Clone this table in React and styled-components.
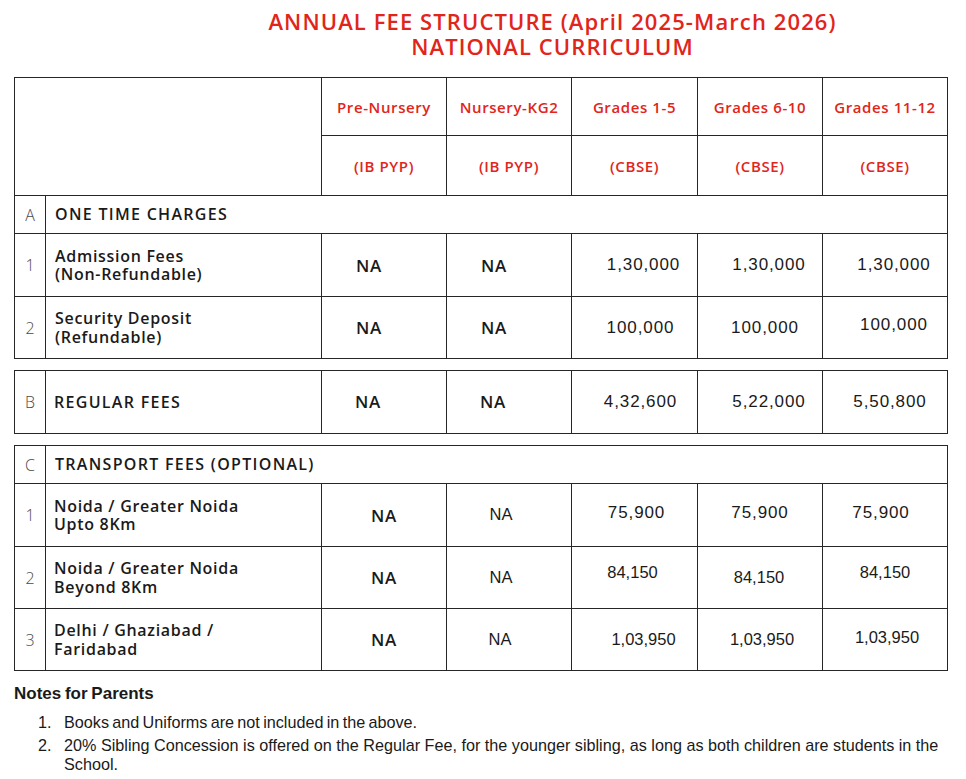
import styled, { createGlobalStyle } from 'styled-components';

const GlobalStyle = createGlobalStyle`
  body {
    margin: 0;
    background: #ffffff;
    font-family: "Open Sans", "Liberation Sans", sans-serif;
    color: #1a1a1a;
  }
`;

const Page = styled.div`
  width: 966px;
  box-sizing: border-box;
  padding: 9px 19px 0 14px;
`;

const Title = styled.h1`
  margin: 0 0 18px;
  padding-left: 144px;
  text-align: center;
  color: #e1251b;
  font-family: "Open Sans", sans-serif;
  font-weight: 600;
  font-size: 22px;
  line-height: 25px;
  letter-spacing: 1.1px;
`;

const Table = styled.table`
  width: 933px;
  table-layout: fixed;
  border-collapse: collapse;
  margin-top: ${({ $gap }) => $gap || 0}px;
`;

const Row = styled.tr`
  height: ${({ $h }) => $h}px;
`;

const Cell = styled.td`
  border: 1px solid #262626;
  padding: 0 0 ${({ $up }) => $up || 0}px ${({ $shift }) => ($shift > 0 ? $shift : 0)}px;
  padding-right: ${({ $shift }) => ($shift < 0 ? -$shift : 0)}px;
  text-align: center;
  vertical-align: middle;
  font-family: "Liberation Sans", Arial, sans-serif;
  font-size: ${({ $plain }) => ($plain ? '16.5px' : '17px')};
  letter-spacing: ${({ $plain }) => ($plain ? '0' : '0.9px')};
  color: #1a1a1a;
`;

const HeadCell = styled.th`
  border: 1px solid #262626;
  padding: 0;
  text-align: center;
  vertical-align: middle;
  color: #e1251b;
  font-family: "Open Sans", sans-serif;
  font-weight: 600;
  font-size: 15px;
  letter-spacing: 0.6px;
`;

const Letter = styled.td`
  border: 1px solid #262626;
  padding: 0;
  text-align: center;
  vertical-align: middle;
  color: #4a4a4a;
  font-family: "Open Sans", sans-serif;
  font-weight: 300;
  font-size: 16px;
`;

const Label = styled.td`
  border: 1px solid #262626;
  padding: 0 0 0 ${({ $pad }) => $pad || 9}px;
  text-align: left;
  vertical-align: middle;
  font-family: "Open Sans", sans-serif;
  font-weight: 600;
  font-size: 16px;
  line-height: 18.5px;
  letter-spacing: ${({ $wide }) => ($wide ? '1.3px' : '0.7px')};
  color: #1a1a1a;
`;

const Na = styled(Cell)`
  font-family: "Open Sans", sans-serif;
  font-weight: 600;
  font-size: 17px;
  letter-spacing: 0.8px;
`;

const Notes = styled.section`
  margin-top: 13px;
  margin-right: -8px;
  font-family: "Liberation Sans", Arial, sans-serif;
  color: #1a1a1a;
`;

const NotesTitle = styled.h2`
  margin: 0 0 9px;
  font-size: 17px;
  font-weight: 700;
  word-spacing: -1px;
`;

const NoteList = styled.ol`
  list-style: none;
  margin: 0;
  padding: 0 0 0 24px;
`;

const NoteItem = styled.li`
  display: flex;
  font-size: 16.2px;
  line-height: 19.5px;
  margin-bottom: 3px;
  word-spacing: ${({ $tight }) => ($tight ? '-1.2px' : '0')};
`;

const NoteNum = styled.span`
  flex: 0 0 26px;
`;

const Cols = () => (
  <colgroup>
    <col style={{ width: 31 }} />
    <col style={{ width: 276 }} />
    <col style={{ width: 125 }} />
    <col style={{ width: 125 }} />
    <col style={{ width: 126 }} />
    <col style={{ width: 125 }} />
    <col style={{ width: 125 }} />
  </colgroup>
);

const App = () => (
  <>
    <GlobalStyle />
    <Page>
      <Title>
        ANNUAL FEE STRUCTURE (April 2025-March 2026)
        <br />
        NATIONAL CURRICULUM
      </Title>

      <Table>
        <Cols />
        <thead>
          <Row $h={58}>
            <HeadCell colSpan={2} rowSpan={2} />
            <HeadCell>Pre-Nursery</HeadCell>
            <HeadCell>Nursery-KG2</HeadCell>
            <HeadCell>Grades 1-5</HeadCell>
            <HeadCell>Grades 6-10</HeadCell>
            <HeadCell>Grades 11-12</HeadCell>
          </Row>
          <Row $h={60}>
            <HeadCell>(IB PYP)</HeadCell>
            <HeadCell>(IB PYP)</HeadCell>
            <HeadCell>(CBSE)</HeadCell>
            <HeadCell>(CBSE)</HeadCell>
            <HeadCell>(CBSE)</HeadCell>
          </Row>
        </thead>
        <tbody>
          <Row $h={38}>
            <Letter>A</Letter>
            <Label colSpan={6} $wide>ONE TIME CHARGES</Label>
          </Row>
          <Row $h={63}>
            <Letter>1</Letter>
            <Label>
              Admission Fees
              <br />
              (Non-Refundable)
            </Label>
            <Na $shift={-30}>NA</Na>
            <Na $shift={-30}>NA</Na>
            <Cell $shift={18}>1,30,000</Cell>
            <Cell $shift={18}>1,30,000</Cell>
            <Cell $shift={18}>1,30,000</Cell>
          </Row>
          <Row $h={62}>
            <Letter>2</Letter>
            <Label>
              Security Deposit
              <br />
              (Refundable)
            </Label>
            <Na $shift={-30}>NA</Na>
            <Na $shift={-30}>NA</Na>
            <Cell $shift={12}>100,000</Cell>
            <Cell $shift={10}>100,000</Cell>
            <Cell $shift={18} $up={6}>100,000</Cell>
          </Row>
        </tbody>
      </Table>

      <Table $gap={11}>
        <Cols />
        <tbody>
          <Row $h={63}>
            <Letter>B</Letter>
            <Label $pad={8} $wide>REGULAR FEES</Label>
            <Na $shift={-32} $up={1}>NA</Na>
            <Na $shift={-32} $up={1}>NA</Na>
            <Cell $shift={12}>4,32,600</Cell>
            <Cell $shift={18}>5,22,000</Cell>
            <Cell $shift={10}>5,50,800</Cell>
          </Row>
        </tbody>
      </Table>

      <Table $gap={11}>
        <Cols />
        <tbody>
          <Row $h={38}>
            <Letter>C</Letter>
            <Label colSpan={6} $wide>TRANSPORT FEES (OPTIONAL)</Label>
          </Row>
          <Row $h={63}>
            <Letter>1</Letter>
            <Label $pad={8}>
              Noida / Greater Noida
              <br />
              Upto 8Km
            </Label>
            <Na>NA</Na>
            <Cell $plain $shift={-16} $up={2}>NA</Cell>
            <Cell $shift={4} $up={4}>75,900</Cell>
            <Cell $shift={0} $up={4}>75,900</Cell>
            <Cell $shift={-8} $up={4}>75,900</Cell>
          </Row>
          <Row $h={62}>
            <Letter>2</Letter>
            <Label $pad={8}>
              Noida / Greater Noida
              <br />
              Beyond 8Km
            </Label>
            <Na>NA</Na>
            <Cell $plain $shift={-16}>NA</Cell>
            <Cell $plain $shift={-4} $up={10}>84,150</Cell>
            <Cell $plain $shift={-2}>84,150</Cell>
            <Cell $plain $shift={0} $up={10}>84,150</Cell>
          </Row>
          <Row $h={62}>
            <Letter>3</Letter>
            <Label $pad={8}>
              Delhi / Ghaziabad /
              <br />
              Faridabad
            </Label>
            <Na>NA</Na>
            <Cell $plain $shift={-18}>NA</Cell>
            <Cell $plain $shift={18}>1,03,950</Cell>
            <Cell $plain $shift={4}>1,03,950</Cell>
            <Cell $plain $shift={4} $up={4}>1,03,950</Cell>
          </Row>
        </tbody>
      </Table>

      <Notes>
        <NotesTitle>Notes for Parents</NotesTitle>
        <NoteList>
          <NoteItem $tight>
            <NoteNum>1.</NoteNum>
            <span>Books and Uniforms are not included in the above.</span>
          </NoteItem>
          <NoteItem>
            <NoteNum>2.</NoteNum>
            <span>
              20% Sibling Concession is offered on the Regular Fee, for the younger sibling, as long as both
              children are students in the School.
            </span>
          </NoteItem>
        </NoteList>
      </Notes>
    </Page>
  </>
);

export default App;
